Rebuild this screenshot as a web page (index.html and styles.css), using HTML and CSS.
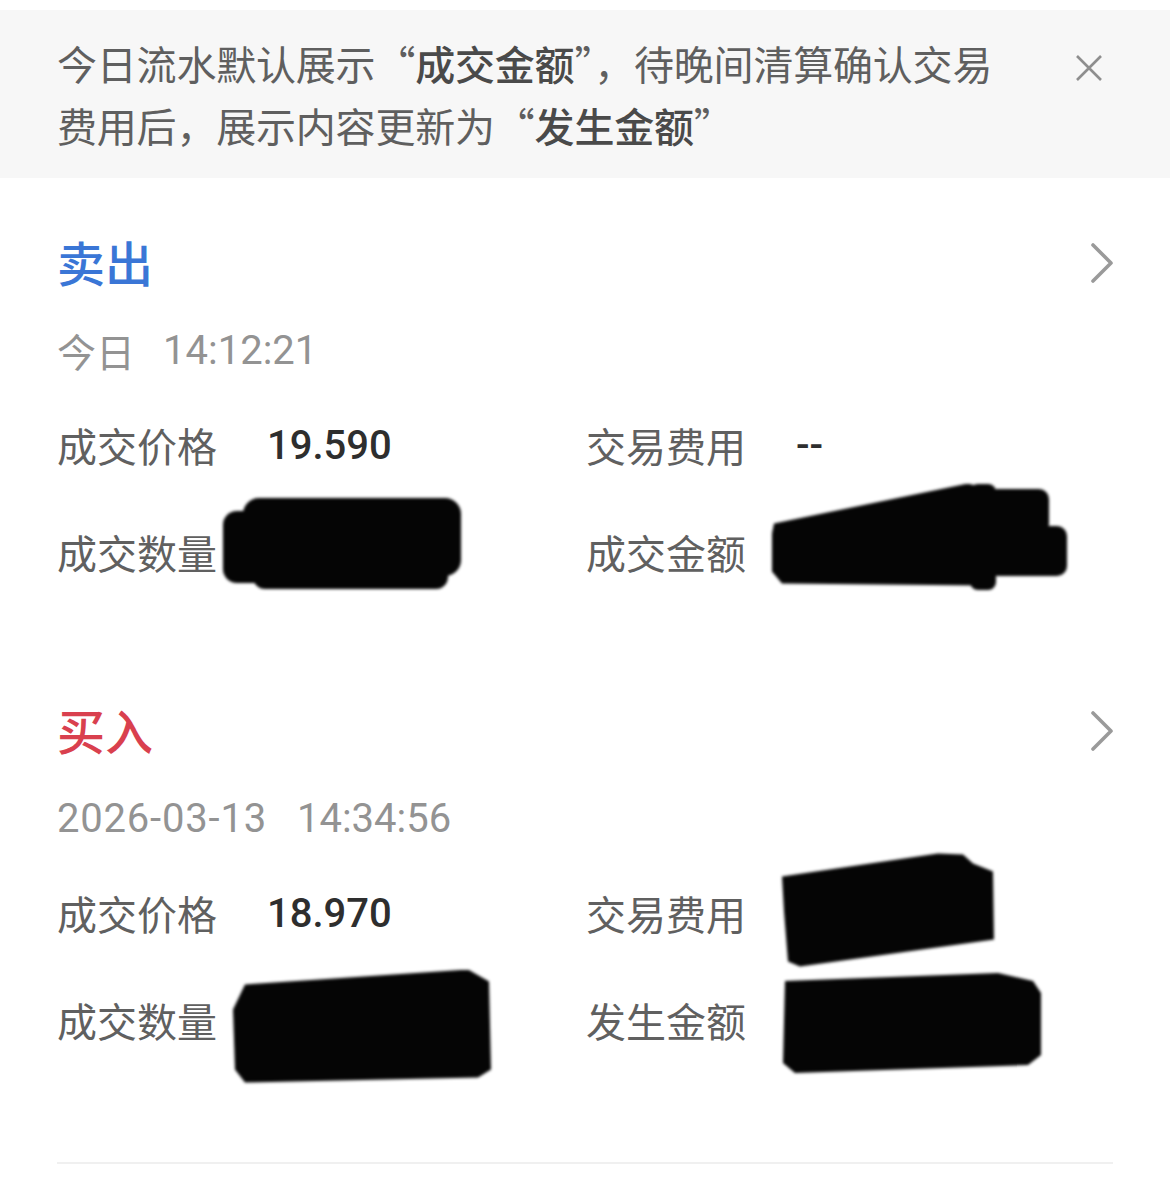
FILE: index.html
```html
<!DOCTYPE html>
<html lang="zh-CN">
<head>
<meta charset="utf-8">
<title>今日流水</title>
<link rel="stylesheet" href="styles.css">
</head>
<body>
<div class="notice">
  <p class="notice-text">今日流水默认展示“<b>成交金额</b>”，待晚间清算确认交易<br>费用后，展示内容更新为“<b>发生金额</b>”</p>
  <button class="notice-close" aria-label="关闭">
    <svg width="28" height="28" viewBox="0 0 28 28"><path d="M2 2 L26 26 M26 2 L2 26" stroke="#8e8e8e" stroke-width="2.6" fill="none"/></svg>
  </button>
</div>

<section class="record">
  <div class="record-head">
    <span class="record-type sell">卖出</span>
    <svg class="chevron" width="24" height="40" viewBox="0 0 24 40"><path d="M3 2 L21 20 L3 38" stroke="#9a9a9a" stroke-width="3.6" stroke-linecap="round" stroke-linejoin="round" fill="none"/></svg>
  </div>
  <div class="record-time"><span class="day">今日</span><span class="num">14:12:21</span></div>
  <div class="record-grid">
    <div class="field"><span class="label">成交价格</span><span class="value">19.590</span></div>
    <div class="field"><span class="label">交易费用</span><span class="value">--</span></div>
    <div class="field"><span class="label">成交数量</span>
      <span class="redact r1"><span class="ink r1a"></span><span class="ink r1b"></span><span class="ink r1c"></span></span>
    </div>
    <div class="field"><span class="label">成交金额</span>
      <span class="redact r2"><span class="ink r2a"></span><span class="ink r2b"></span><span class="ink r2c"></span><span class="ink r2d"></span></span>
    </div>
  </div>
</section>

<section class="record">
  <div class="record-head">
    <span class="record-type buy">买入</span>
    <svg class="chevron" width="24" height="40" viewBox="0 0 24 40"><path d="M3 2 L21 20 L3 38" stroke="#9a9a9a" stroke-width="3.6" stroke-linecap="round" stroke-linejoin="round" fill="none"/></svg>
  </div>
  <div class="record-time"><span class="num">2026-03-13</span><span class="num gap">14:34:56</span></div>
  <div class="record-grid">
    <div class="field"><span class="label">成交价格</span><span class="value">18.970</span></div>
    <div class="field"><span class="label">交易费用</span>
      <span class="redact r3"><span class="ink r3a"></span></span>
    </div>
    <div class="field"><span class="label">成交数量</span>
      <span class="redact r5"><span class="ink r5a"></span></span>
    </div>
    <div class="field"><span class="label">发生金额</span>
      <span class="redact r4"><span class="ink r4a"></span></span>
    </div>
  </div>
</section>

<div class="divider"></div>
</body>
</html>
```

FILE: styles.css
```css
* { box-sizing: border-box; }

body {
  margin: 0;
  background: #ffffff;
  font-family: "Noto Sans CJK SC", "Noto Sans", sans-serif;
}

.notice {
  margin-top: 10px;
  background: #f7f7f7;
  padding: 22px 67px 22px 57px;
  display: flex;
  justify-content: space-between;
  align-items: flex-start;
}

.notice-text {
  margin: 0;
  font-size: 40px;
  line-height: 62px;
  color: #5f5f5f;
  letter-spacing: -0.2px;
}

.notice-text b {
  color: #4a4a4a;
  font-weight: 500;
}

.notice-close {
  margin-top: 22px;
  padding: 0;
  border: 0;
  background: none;
  width: 28px;
  height: 28px;
  display: block;
}

.notice-close svg { display: block; }

.record {
  padding: 56px 56px 64px 57px;
}

.record-head {
  height: 60px;
  display: flex;
  align-items: center;
  justify-content: space-between;
}

.record-type {
  font-size: 48px;
  line-height: 60px;
  font-weight: 500;
  margin-top: -6px;
}

.record-type.sell { color: #3a76d6; }
.record-type.buy { color: #d9404e; }

.chevron { display: block; margin-top: -2px; }

.record-time {
  margin-top: 31px;
  height: 50px;
  display: flex;
  align-items: center;
  color: #939393;
  font-size: 39px;
}

.record-time .num {
  font-family: Roboto, "Liberation Sans", sans-serif;
  font-size: 40px;
  margin-left: 28px;
}

.record-time .num:first-child { margin-left: 0; letter-spacing: 0.8px; }
.record-time .num.gap { margin-left: 30px; letter-spacing: 0; }

.record-grid {
  margin-top: 40px;
  display: grid;
  grid-template-columns: 529px 1fr;
  row-gap: 47px;
}

.field {
  height: 60px;
  display: flex;
  align-items: center;
}

.label {
  font-size: 40px;
  color: #606060;
  width: 160px;
  flex: none;
  white-space: nowrap;
}

.value {
  margin-left: 50px;
  font-family: Roboto, "Liberation Sans", sans-serif;
  font-weight: 500;
  font-size: 40px;
  color: #2e2e2e;
}

/* redaction scribbles */
.redact {
  position: relative;
  display: inline-block;
  flex: none;
  filter: blur(1.8px);
}

.ink {
  position: absolute;
  background: #050505;
}

.r1 { width: 240px; height: 93px; margin-left: 6px; transform: translateY(-10px); }
.r1a { left: 20px; top: 2px; width: 218px; height: 78px; border-radius: 16px; }
.r1b { left: 0; top: 15px; width: 70px; height: 72px; border-radius: 14px; }
.r1c { left: 30px; top: 35px; width: 195px; height: 58px; border-radius: 12px; }

.r2 { width: 295px; height: 107px; margin-left: 26px; transform: translateY(-15px); }
.r2a { left: 0; top: 0; width: 210px; height: 107px;
  clip-path: polygon(2px 40px, 196px 0, 210px 4px, 210px 102px, 10px 100px, 0 88px, 0 50px); }
.r2b { left: 198px; top: 0; width: 26px; height: 106px; border-radius: 8px; }
.r2c { left: 215px; top: 5px; width: 62px; height: 45px; border-radius: 10px; }
.r2d { left: 215px; top: 42px; width: 80px; height: 50px; border-radius: 10px; }

.r3 { width: 217px; height: 115px; margin-left: 32px; transform: translateY(-4px); }
.r3a { left: 0; top: 0; width: 217px; height: 115px;
  clip-path: polygon(4px 25px, 160px 2px, 185px 3px, 195px 12px, 215px 20px, 216px 88px, 22px 115px, 10px 110px, 6px 60px); }

.r4 { width: 260px; height: 100px; margin-left: 37px; transform: translateY(3px); }
.r4a { left: 0; top: 0; width: 260px; height: 100px;
  clip-path: polygon(2px 8px, 215px 0, 250px 8px, 258px 20px, 258px 82px, 245px 92px, 12px 100px, 0 90px); }

.r5 { width: 260px; height: 113px; margin-left: 16px; transform: translateY(6px); }
.r5a { left: 0; top: 0; width: 260px; height: 113px;
  clip-path: polygon(12px 15px, 235px 0, 256px 12px, 258px 100px, 245px 108px, 12px 113px, 2px 100px, 0 40px); }

.divider {
  margin: 48px 57px 0 57px;
  height: 2px;
  background: #f0f0f0;
}
```
